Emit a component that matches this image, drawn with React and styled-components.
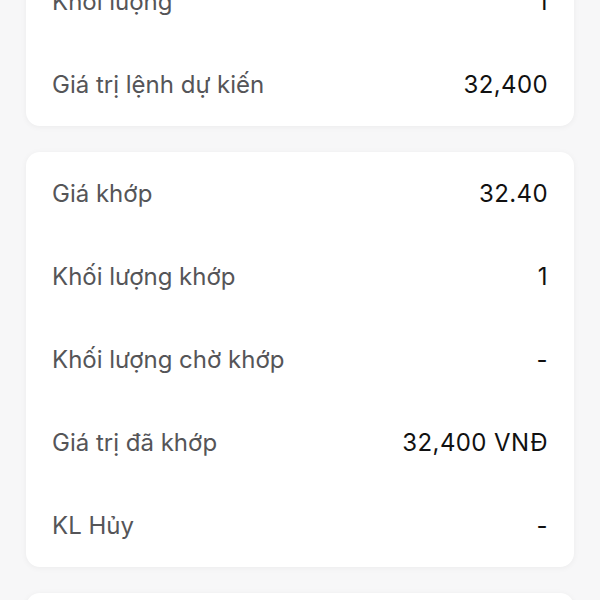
import React from 'react'
import styled, { createGlobalStyle } from 'styled-components'

const GlobalStyle = createGlobalStyle`
  html, body {
    margin: 0;
    padding: 0;
    background: #f7f7f8;
    font-family: Inter, "Noto Sans", sans-serif;
  }
`

const Page = styled.div`
  width: 600px;
  height: 600px;
  overflow: hidden;
  box-sizing: border-box;
  padding: 0 26px;
  display: flex;
  flex-direction: column;
  gap: 26px;
`

const Card = styled.div`
  background: #ffffff;
  border-radius: 14px;
  box-shadow: 0 1px 6px rgba(0, 0, 0, 0.05);
  display: flex;
  flex-direction: column;
  flex-shrink: 0;
  margin-top: ${(p) => p.$offset || 0}px;
  min-height: ${(p) => p.$minHeight || 0}px;
`

const Row = styled.div`
  height: 83px;
  padding: 0 26px;
  display: flex;
  align-items: center;
  justify-content: space-between;
  font-size: 24px;
`

const Label = styled.span`
  color: #555558;
`

const Value = styled.span`
  color: #111111;
  letter-spacing: 0.4px;
`

const orderRows = [
  ['Khối lượng', '1'],
  ['Giá trị lệnh dự kiến', '32,400'],
]

const matchRows = [
  ['Giá khớp', '32.40'],
  ['Khối lượng khớp', '1'],
  ['Khối lượng chờ khớp', '-'],
  ['Giá trị đã khớp', '32,400 VNĐ'],
  ['KL Hủy', '-'],
]

const App = () => {
  return (
    <>
      <GlobalStyle />
      <Page>
        <Card $offset={-40}>
          {orderRows.map(([label, value]) => (
            <Row key={label}>
              <Label>{label}</Label>
              <Value>{value}</Value>
            </Row>
          ))}
        </Card>
        <Card>
          {matchRows.map(([label, value]) => (
            <Row key={label}>
              <Label>{label}</Label>
              <Value>{value}</Value>
            </Row>
          ))}
        </Card>
        <Card $minHeight={60} />
      </Page>
    </>
  )
}

export default App
